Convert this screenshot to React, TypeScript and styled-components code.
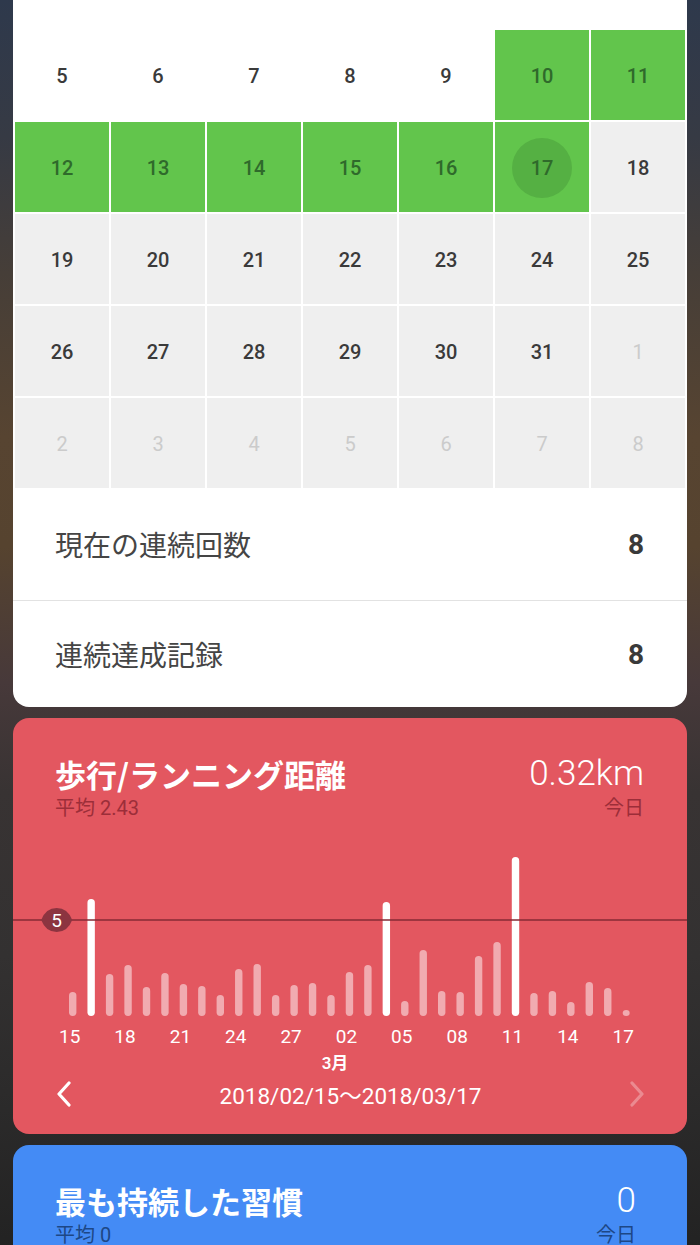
import React from 'react'
import styled, { createGlobalStyle } from 'styled-components'

type CellKind = 'blank' | 'done' | 'today' | 'future' | 'other'

interface Cell {
  day: number
  kind: CellKind
}

const row = (days: number[], kind: CellKind): Cell[] => days.map((day) => ({ day, kind }))

const calendar: Cell[] = [
  ...row([5, 6, 7, 8, 9], 'blank'),
  ...row([10, 11, 12, 13, 14, 15, 16], 'done'),
  { day: 17, kind: 'today' },
  ...row([18, 19, 20, 21, 22, 23, 24, 25, 26, 27, 28, 29, 30, 31], 'future'),
  ...row([1, 2, 3, 4, 5, 6, 7, 8], 'other'),
]

// daily distance bars, Feb 15 -> Mar 17 (height in px, hit = over goal)
const bars = [
  24, 117, 42, 51, 29, 43, 32, 30, 21, 47, 52, 21, 31, 33, 21, 44, 51, 114, 15, 66, 25, 24, 60, 74, 159,
  23, 25, 14, 34, 28, 5,
]
const hits = [1, 17, 24]
const axisLabels = ['15', '18', '21', '24', '27', '02', '05', '08', '11', '14', '17']

const CHART_W = 674
const BAR_X0 = 59.7
const BAR_STEP = 18.45
const BASE_Y = 180
const GOAL_Y = 84

const GlobalStyle = createGlobalStyle`
  body {
    margin: 0;
    min-height: 1245px;
    font-family: Roboto, "Noto Sans CJK JP", sans-serif;
    background: linear-gradient(
      180deg,
      #2e394c 0%,
      #363a44 10%,
      #463e38 20%,
      #574431 32%,
      #56432f 40%,
      #47393a 50%,
      #383333 58%,
      #333131 70%,
      #2c2b2b 80%,
      #222222 92%,
      #1e1e1e 100%
    );
  }
`

const Page = styled.div`
  padding: 0 13px;
  display: flex;
  flex-direction: column;
  gap: 11px;
`

const WhiteCard = styled.section`
  background: #ffffff;
  border-radius: 0 0 16px 16px;
  padding-top: 30px;
  overflow: hidden;
`

const Grid = styled.div`
  display: grid;
  grid-template-columns: repeat(7, 1fr);
  grid-auto-rows: 90px;
  gap: 2px;
  padding: 0 2px;
`

const cellBg: Record<CellKind, string> = {
  blank: '#ffffff',
  done: '#62c54c',
  today: '#62c54c',
  future: '#efefef',
  other: '#efefef',
}

const cellInk: Record<CellKind, string> = {
  blank: '#3a3a3a',
  done: '#2f6a2b',
  today: '#2f6a2b',
  future: '#3a3a3a',
  other: '#cbcbcb',
}

const DayCell = styled.div<{ $kind: CellKind }>`
  display: flex;
  align-items: center;
  justify-content: center;
  background: ${(p) => cellBg[p.$kind]};
`

const DayNumber = styled.span<{ $kind: CellKind }>`
  width: 60px;
  height: 60px;
  margin-top: 2px;
  border-radius: 50%;
  display: flex;
  align-items: center;
  justify-content: center;
  font-size: 20px;
  font-weight: ${(p) => (p.$kind === 'other' ? 400 : 500)};
  color: ${(p) => cellInk[p.$kind]};
  background: ${(p) => (p.$kind === 'today' ? '#55b043' : 'transparent')};
`

const StatRow = styled.div<{ $h: number; $line?: boolean }>`
  height: ${(p) => p.$h}px;
  display: flex;
  align-items: center;
  justify-content: space-between;
  padding: 0 43px 0 42px;
  border-bottom: ${(p) => (p.$line ? '1px solid #e2e2e2' : 'none')};
`

const StatLabel = styled.span`
  font-family: "Noto Sans CJK JP", sans-serif;
  font-size: 28px;
  font-weight: 400;
  color: #454545;
`

const StatValue = styled.span`
  font-size: 28px;
  font-weight: 700;
  color: #3a3a3a;
`

const ColorCard = styled.section<{ $bg: string; $h: number }>`
  background: ${(p) => p.$bg};
  border-radius: 16px;
  height: ${(p) => p.$h}px;
  color: #ffffff;
  display: flex;
  flex-direction: column;
  overflow: hidden;
`

const Header = styled.div<{ $right: number }>`
  display: flex;
  justify-content: space-between;
  padding: 38px ${(p) => p.$right}px 0 42px;
`

const HeadCol = styled.div<{ $end?: boolean }>`
  display: flex;
  flex-direction: column;
  align-items: ${(p) => (p.$end ? 'flex-end' : 'flex-start')};
`

const Title = styled.h2`
  margin: 0;
  font-family: "Noto Sans CJK JP", sans-serif;
  font-size: 31px;
  line-height: 36px;
  font-weight: 700;
`

const BigValue = styled.span`
  font-size: 35px;
  line-height: 36px;
  font-weight: 300;
`

const SubText = styled.span<{ $ink: string }>`
  margin-top: 4px;
  font-family: Roboto, "Noto Sans CJK JP", sans-serif;
  font-size: 20px;
  line-height: 24px;
  color: ${(p) => p.$ink};
`

const Chart = styled.svg`
  display: block;
  margin-top: 16px;
  font-family: Roboto, "Noto Sans CJK JP", sans-serif;
`

const Nav = styled.div`
  height: 36px;
  display: flex;
  align-items: center;
  justify-content: space-between;
  padding: 0 42px 0 43px;
`

const RangeText = styled.span`
  font-size: 22.5px;
  font-weight: 400;
  color: #ffffff;
`

const Chevron: React.FC<{ dir: 'left' | 'right'; faded?: boolean }> = ({ dir, faded }) => (
  <svg width="16" height="26" viewBox="0 0 16 26" style={{ opacity: faded ? 0.3 : 1 }}>
    <polyline
      points={dir === 'left' ? '13,2 3,13 13,24' : '3,2 13,13 3,24'}
      fill="none"
      stroke="#ffffff"
      strokeWidth="3.2"
      strokeLinecap="round"
      strokeLinejoin="round"
    />
  </svg>
)

const badgePath = (cx: number, cy: number) =>
  `M${cx - 15.5} ${cy} Q${cx - 11} ${cy - 12} ${cx} ${cy - 12} Q${cx + 11} ${cy - 12} ${cx + 15.5} ${cy} ` +
  `Q${cx + 11} ${cy + 12} ${cx} ${cy + 12} Q${cx - 11} ${cy + 12} ${cx - 15.5} ${cy} Z`

const DistanceChart = () => (
  <Chart width={CHART_W} height={240} viewBox={`0 0 ${CHART_W} 240`}>
    {bars.map((h, i) => {
      const x = BAR_X0 + i * BAR_STEP
      const hit = hits.includes(i)
      const w = i === bars.length - 1 ? 7 : 7.4
      return (
        <rect
          key={i}
          x={x - w / 2}
          y={BASE_Y - Math.max(h, 6)}
          width={w}
          height={Math.max(h, 6)}
          rx={3.7}
          fill={hit ? '#ffffff' : 'rgba(255,255,255,0.5)'}
        />
      )
    })}
    <line x1={0} y1={GOAL_Y} x2={CHART_W} y2={GOAL_Y} stroke="#862a35" strokeWidth={1.5} />
    <path d={badgePath(43.7, GOAL_Y)} fill="#8c3440" />
    <text x={43.7} y={GOAL_Y + 6.5} textAnchor="middle" fontSize={19} fill="#ffffff">
      5
    </text>
    {axisLabels.map((label, k) => (
      <text
        key={label}
        x={BAR_X0 + k * 3 * BAR_STEP - 3}
        y={207}
        textAnchor="middle"
        fontSize={19}
        fill="#ffffff"
      >
        {label}
      </text>
    ))}
    <text x={322} y={233} textAnchor="middle" fontSize={17} fontWeight={600} fill="#ffffff">
      3月
    </text>
  </Chart>
)

export default function App() {
  return (
    <>
      <GlobalStyle />
      <Page>
        <WhiteCard>
          <Grid>
            {calendar.map((c, i) => (
              <DayCell key={i} $kind={c.kind}>
                <DayNumber $kind={c.kind}>{c.day}</DayNumber>
              </DayCell>
            ))}
          </Grid>
          <StatRow $h={112} $line>
            <StatLabel>現在の連続回数</StatLabel>
            <StatValue>8</StatValue>
          </StatRow>
          <StatRow $h={106}>
            <StatLabel>連続達成記録</StatLabel>
            <StatValue>8</StatValue>
          </StatRow>
        </WhiteCard>

        <ColorCard $bg="#e35760" $h={416}>
          <Header $right={43}>
            <HeadCol>
              <Title>歩行/ランニング距離</Title>
              <SubText $ink="#9c2e39">平均 2.43</SubText>
            </HeadCol>
            <HeadCol $end>
              <BigValue>0.32km</BigValue>
              <SubText $ink="#9c2e39">今日</SubText>
            </HeadCol>
          </Header>
          <DistanceChart />
          <Nav>
            <Chevron dir="left" />
            <RangeText>2018/02/15〜2018/03/17</RangeText>
            <Chevron dir="right" faded />
          </Nav>
        </ColorCard>

        <ColorCard $bg="#448bf5" $h={220}>
          <Header $right={51}>
            <HeadCol>
              <Title>最も持続した習慣</Title>
              <SubText $ink="#1d4785">平均 0</SubText>
            </HeadCol>
            <HeadCol $end>
              <BigValue>0</BigValue>
              <SubText $ink="#1d4785">今日</SubText>
            </HeadCol>
          </Header>
        </ColorCard>
      </Page>
    </>
  )
}
